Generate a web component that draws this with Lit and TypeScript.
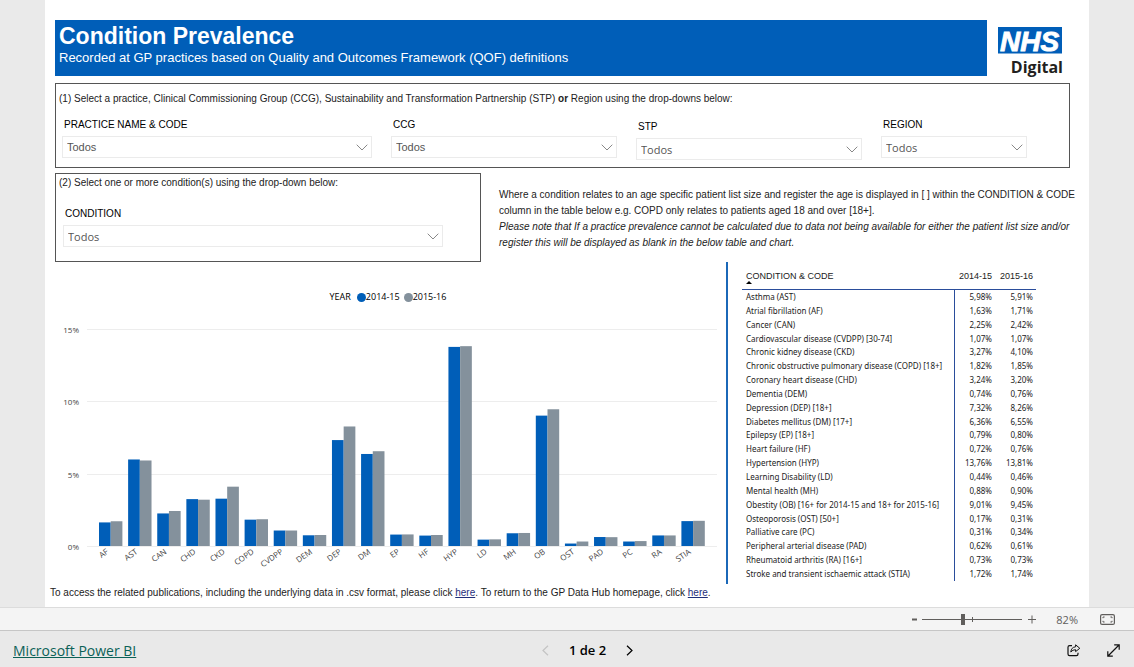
import { LitElement, html, svg, css } from "lit";
import { customElement, property } from "lit/decorators.js";

interface Condition {
  name: string;
  code: string;
  y1: number;
  y2: number;
}

const CONDITIONS: Condition[] = [
  { name: "Asthma (AST)", code: "AST", y1: 5.98, y2: 5.91 },
  { name: "Atrial fibrillation (AF)", code: "AF", y1: 1.63, y2: 1.71 },
  { name: "Cancer (CAN)", code: "CAN", y1: 2.25, y2: 2.42 },
  { name: "Cardiovascular disease (CVDPP) [30-74]", code: "CVDPP", y1: 1.07, y2: 1.07 },
  { name: "Chronic kidney disease (CKD)", code: "CKD", y1: 3.27, y2: 4.1 },
  { name: "Chronic obstructive pulmonary disease (COPD) [18+]", code: "COPD", y1: 1.82, y2: 1.85 },
  { name: "Coronary heart disease (CHD)", code: "CHD", y1: 3.24, y2: 3.2 },
  { name: "Dementia (DEM)", code: "DEM", y1: 0.74, y2: 0.76 },
  { name: "Depression (DEP) [18+]", code: "DEP", y1: 7.32, y2: 8.26 },
  { name: "Diabetes mellitus (DM) [17+]", code: "DM", y1: 6.36, y2: 6.55 },
  { name: "Epilepsy (EP) [18+]", code: "EP", y1: 0.79, y2: 0.8 },
  { name: "Heart failure (HF)", code: "HF", y1: 0.72, y2: 0.76 },
  { name: "Hypertension (HYP)", code: "HYP", y1: 13.76, y2: 13.81 },
  { name: "Learning Disability (LD)", code: "LD", y1: 0.44, y2: 0.46 },
  { name: "Mental health (MH)", code: "MH", y1: 0.88, y2: 0.9 },
  { name: "Obestity (OB) [16+ for 2014-15 and 18+ for 2015-16]", code: "OB", y1: 9.01, y2: 9.45 },
  { name: "Osteoporosis (OST) [50+]", code: "OST", y1: 0.17, y2: 0.31 },
  { name: "Palliative care (PC)", code: "PC", y1: 0.31, y2: 0.34 },
  { name: "Peripheral arterial disease (PAD)", code: "PAD", y1: 0.62, y2: 0.61 },
  { name: "Rheumatoid arthritis (RA) [16+]", code: "RA", y1: 0.73, y2: 0.73 },
  { name: "Stroke and transient ischaemic attack (STIA)", code: "STIA", y1: 1.72, y2: 1.74 },
];

const percent = (v: number) => v.toFixed(2).replace(".", ",") + "%";

@customElement("filter-select")
class FilterSelect extends LitElement {
  @property() label = "";
  @property({ type: Boolean, reflect: true }) humanist = false;

  static styles = css`
    :host {
      display: block;
      font-family: "Liberation Sans", Arial, sans-serif;
    }
    .label {
      display: block;
      padding-left: 2px;
      font-size: 10px;
      line-height: 14px;
      color: #000;
    }
    .box {
      display: grid;
      grid-template-columns: 1fr 21px;
      align-items: center;
      margin-top: 4px;
    }
    .select {
      grid-area: 1 / 1 / 2 / 3;
      appearance: none;
      width: 100%;
      height: 22px;
      margin: 0;
      padding: 0 24px 0 4px;
      border: 1px solid #ebebeb;
      border-radius: 0;
      background: #fff;
      color: #555;
      font-family: inherit;
      font-size: 11px;
    }
    :host([humanist]) .select {
      font-family: "Open Sans", "Noto Sans", sans-serif;
    }
    .chevron {
      grid-area: 1 / 2;
      width: 12px;
      height: 7px;
      pointer-events: none;
      margin-left: 5px;
      fill: none;
      stroke: #888;
    }
  `;

  render() {
    return html`
      <label class="label" for="field">${this.label}</label>
      <div class="box">
        <select class="select" id="field"><option>Todos</option></select>
        <svg class="chevron" viewBox="0 0 12 7"><path d="M.7 .7 6 6 11.3 .7" /></svg>
      </div>
    `;
  }
}

@customElement("prevalence-chart")
class PrevalenceChart extends LitElement {
  static styles = css`
    :host {
      display: block;
      font-family: "Open Sans", "Noto Sans", sans-serif;
    }
    .legend {
      display: flex;
      justify-content: center;
      align-items: center;
      gap: 4px;
      font-size: 9px;
      line-height: 14px;
      color: #000;
    }
    .key {
      display: flex;
      align-items: center;
    }
    .title {
      padding-right: 2px;
    }
    .dot {
      width: 9px;
      height: 9px;
      border-radius: 50%;
      background: #005eb8;
    }
    .dot.second {
      background: #84919c;
    }
    .plot {
      display: block;
      width: 100%;
      margin-top: 14px;
    }
    .grid {
      stroke: #ededed;
    }
    .axis {
      font-size: 8px;
      fill: #444;
      text-anchor: end;
    }
    .first-year {
      fill: #005eb8;
    }
    .second-year {
      fill: #84919c;
    }
  `;

  render() {
    const base = 228;
    const unit = 14.47;
    const pitch = 29.12;
    const bar = 11.7;
    const items = [...CONDITIONS].sort((a, b) => a.code.localeCompare(b.code));
    return html`
      <div class="legend">
        <span class="title">YEAR</span>
        <span class="key"><i class="dot"></i>2014-15</span>
        <span class="key"><i class="dot second"></i>2015-16</span>
      </div>
      <svg class="plot" viewBox="0 0 666 266" role="img" aria-label="Prevalence by condition and year">
        ${[0, 5, 10, 15].map((v) => {
          const y = Math.round(base - v * unit) + 0.5;
          return svg`<line class="grid" x1="32" x2="662" y1=${y} y2=${y}></line>
            <text class="axis" x="24" y=${y + 3}>${v}%</text>`;
        })}
        ${items.map((c, i) => {
          const x = 44 + i * pitch;
          return svg`<rect class="first-year" x=${x} y=${base - c.y1 * unit} width=${bar} height=${c.y1 * unit}></rect>
            <rect class="second-year" x=${x + bar} y=${base - c.y2 * unit} width=${bar} height=${c.y2 * unit}></rect>
            <text class="axis" transform=${`translate(${x + 10} 235) rotate(-35)`}>${c.code}</text>`;
        })}
      </svg>
    `;
  }
}

@customElement("prevalence-table")
class PrevalenceTable extends LitElement {
  static styles = css`
    :host {
      display: block;
    }
    .table {
      width: 100%;
      height: 310px;
      border-collapse: collapse;
      font-family: "Noto Sans", "Open Sans", sans-serif;
      font-size: 8px;
      line-height: 12px;
      color: #222;
    }
    th,
    td {
      padding: 0 3px 0 0;
      text-align: right;
      font-weight: 400;
      white-space: nowrap;
    }
    th.name,
    td.name {
      padding: 0 4px;
      text-align: left;
    }
    .head th {
      height: 18px;
      border-bottom: 1px solid #2a4d9b;
      font-family: "Liberation Sans", Arial, sans-serif;
      font-size: 9px;
      line-height: 10px;
      vertical-align: top;
    }
    .arrow {
      display: block;
      width: 6px;
      height: 3px;
    }
    td.name {
      border-right: 1px solid #2a4d9b;
    }
    .year {
      width: 38px;
    }
  `;

  render() {
    return html`
      <table class="table">
        <thead>
          <tr class="head">
            <th class="name">
              CONDITION &amp; CODE
              <svg class="arrow" viewBox="0 0 6 3"><path d="M0 3 3 0 6 3Z" /></svg>
            </th>
            <th class="year">2014-15</th>
            <th class="year">2015-16</th>
          </tr>
        </thead>
        <tbody>
          ${CONDITIONS.map(
            (c) => html`<tr>
              <td class="name">${c.name}</td>
              <td>${percent(c.y1)}</td>
              <td>${percent(c.y2)}</td>
            </tr>`
          )}
        </tbody>
      </table>
    `;
  }
}

@customElement("app-root")
class AppRoot extends LitElement {
  static styles = css`
    :host {
      display: flex;
      flex-direction: column;
      min-height: 100vh;
      background: #eaeaea;
      font-family: "Liberation Sans", Arial, sans-serif;
      font-size: 10px;
      color: #222;
    }
    * {
      box-sizing: border-box;
    }
    .report {
      flex: 1;
      margin: 0 45px;
      padding: 20px 19px 0 5px;
      background: #fff;
    }
    .body {
      padding-left: 5px;
    }
    .top {
      display: flex;
      gap: 11px;
      padding-right: 7px;
    }
    .banner {
      flex: 1;
      padding: 3px 4px 9px;
      background: #005eb8;
      color: #fff;
    }
    .heading {
      margin: 0;
      font-size: 23px;
      line-height: 26px;
      font-weight: 700;
    }
    .sub {
      margin: 0;
      font-size: 13px;
      line-height: 18px;
    }
    .logo {
      display: block;
      width: 65px;
      height: 49px;
      margin-top: 7px;
      overflow: visible;
    }
    .nhs {
      font: italic 700 28px "Liberation Sans", Arial, sans-serif;
      fill: #fff;
      stroke: #fff;
      stroke-width: 0.9;
    }
    .digital {
      font: 700 16px "Open Sans", "Noto Sans", sans-serif;
      fill: #231f20;
      text-anchor: end;
    }
    .panel {
      border: 1px solid #555;
      padding: 8px 3px 9px;
      margin-top: 7px;
    }
    .hint {
      margin: 0;
      line-height: 14px;
    }
    .fields {
      display: grid;
      grid-template-columns: 329fr 245fr 245fr 146fr;
      margin-top: 12px;
      padding: 0 39px 0 3px;
    }
    .field {
      margin-right: 19px;
    }
    .field.lower {
      margin-top: 2px;
      margin-bottom: -2px;
    }
    .field.last {
      margin-right: 0;
    }
    .second {
      display: grid;
      grid-template-columns: minmax(0, 426fr) minmax(0, 571fr);
      gap: 18px;
      margin-top: 5px;
    }
    .second .panel {
      margin: 0;
      padding: 2px 3px 14px;
    }
    .condition {
      margin: 17px 34px 0 4px;
    }
    .note {
      padding-top: 14px;
      line-height: 16px;
      white-space: nowrap;
    }
    .note p {
      margin: 0;
    }
    .data {
      display: grid;
      grid-template-columns: 671fr 344fr;
    }
    .chart {
      padding: 28px 5px 0 0;
    }
    .side {
      border-left: 2px solid #1b68b8;
      padding: 9px 34px 0 14px;
    }
    .links {
      margin: 0;
      padding: 2px 0 6px;
      line-height: 14px;
    }
    .links a {
      color: #1f2f7a;
    }
    .status {
      display: flex;
      align-items: center;
      justify-content: flex-end;
      height: 24px;
      padding-right: 19px;
      border-top: 1px solid #dcdcdc;
      border-bottom: 1px solid #c6c6c6;
      background: #f4f4f4;
      color: #605e5c;
      font-family: "Open Sans", "Noto Sans", sans-serif;
      font-size: 11px;
    }
    .icon-button {
      display: flex;
      padding: 0;
      border: 0;
      background: none;
      color: inherit;
    }
    .icon {
      display: block;
      fill: none;
      stroke: currentColor;
    }
    .slider {
      appearance: none;
      width: 100px;
      height: 12px;
      margin: 0 6px 0 5px;
      background:
        linear-gradient(#605e5c, #605e5c) center / 1px 5px no-repeat,
        linear-gradient(#605e5c, #605e5c) center / 100% 1px no-repeat;
    }
    .slider::-webkit-slider-thumb {
      appearance: none;
      width: 4px;
      height: 11px;
      background: #605e5c;
    }
    .zoom {
      margin: 0 22px 0 20px;
    }
    .footer {
      display: grid;
      grid-template-columns: 1fr auto 1fr;
      align-items: center;
      height: 36px;
      padding: 2px 14px 0 13px;
      background: #e9e9e9;
      font-family: "Open Sans", "Noto Sans", sans-serif;
      font-size: 14px;
    }
    .brand {
      justify-self: start;
      color: #0b6157;
    }
    .pager {
      display: flex;
      align-items: center;
      gap: 20px;
      padding-left: 42px;
      color: #000;
      font-size: 13px;
      font-weight: 600;
    }
    .faded {
      color: #c4c4c4;
    }
    .actions {
      display: flex;
      justify-content: flex-end;
      gap: 26px;
      color: #111;
    }
  `;

  render() {
    return html`
      <main class="report">
        <div class="body">
          <header class="top">
            <div class="banner">
              <h1 class="heading">Condition Prevalence</h1>
              <p class="sub">Recorded at GP practices based on Quality and Outcomes Framework (QOF) definitions</p>
            </div>
            <svg class="logo" viewBox="0 0 65 49" role="img" aria-label="NHS Digital">
              <rect width="64" height="26.5" fill="#005eb8" />
              <text class="nhs" x="2" y="23.5">NHS</text>
              <text class="digital" x="65" y="46">Digital</text>
            </svg>
          </header>

          <section class="panel">
            <p class="hint">
              (1) Select a practice, Clinical Commissioning Group (CCG), Sustainability and Transformation Partnership
              (STP) <strong>or</strong> Region using the drop-downs below:
            </p>
            <div class="fields">
              <filter-select class="field" label="PRACTICE NAME &amp; CODE"></filter-select>
              <filter-select class="field" label="CCG"></filter-select>
              <filter-select class="field lower" label="STP" humanist></filter-select>
              <filter-select class="field last" label="REGION" humanist></filter-select>
            </div>
          </section>

          <section class="second">
            <div class="panel">
              <p class="hint">(2) Select one or more condition(s) using the drop-down below:</p>
              <filter-select class="condition" label="CONDITION" humanist></filter-select>
            </div>
            <div class="note">
              <p>
                Where a condition relates to an age specific patient list size and register the age is displayed in [ ]
                within the CONDITION &amp; CODE<br />column in the table below e.g. COPD only relates to patients aged
                18 and over [18+].
              </p>
              <p>
                <em
                  >Please note that If a practice prevalence cannot be calculated due to data not being available for
                  either the patient list size and/or<br />register this will be displayed as blank in the below table
                  and chart.</em
                >
              </p>
            </div>
          </section>

          <section class="data">
            <prevalence-chart class="chart"></prevalence-chart>
            <div class="side"><prevalence-table></prevalence-table></div>
          </section>
        </div>
        <p class="links">
          To access the related publications, including the underlying data in .csv format, please click
          <a href="#publications">here</a>. To return to the GP Data Hub homepage, click <a href="#home">here</a>.
        </p>
      </main>

      <div class="status">
        <button class="icon-button" aria-label="Zoom out">
          <svg class="icon" width="5" height="9" viewBox="0 0 5 9"><path d="M0 4.5H5" stroke-width="2" /></svg>
        </button>
        <input class="slider" type="range" min="0" max="100" value="40" aria-label="Zoom" />
        <button class="icon-button" aria-label="Zoom in">
          <svg class="icon" width="8" height="9" viewBox="0 0 8 9"><path d="M0 4.5H8M4 .5V8.5" /></svg>
        </button>
        <span class="zoom">82%</span>
        <button class="icon-button" aria-label="Fit to page">
          <svg class="icon" width="15" height="11" viewBox="0 0 15 11">
            <rect x=".6" y=".6" width="13.8" height="9.8" rx="1.5" stroke-width="1.2" />
            <path d="M3 4.2V3H4.6M10.4 3H12V4.2M12 6.8V8H10.4M4.6 8H3V6.8" />
          </svg>
        </button>
      </div>

      <footer class="footer">
        <a class="brand" href="#powerbi">Microsoft Power BI</a>
        <nav class="pager" aria-label="Pages">
          <button class="icon-button faded" aria-label="Previous page" disabled>
            <svg class="icon" width="7" height="11" viewBox="0 0 7 11"><path d="M6 .7 1 5.5 6 10.3" stroke-width="1.2" /></svg>
          </button>
          <span>1 de 2</span>
          <button class="icon-button" aria-label="Next page">
            <svg class="icon" width="7" height="11" viewBox="0 0 7 11"><path d="M1 .7 6 5.5 1 10.3" stroke-width="1.2" /></svg>
          </button>
        </nav>
        <div class="actions">
          <button class="icon-button" aria-label="Share">
            <svg class="icon" width="14" height="13" viewBox="0 0 14 13">
              <path d="M5 1.6H2.6Q1 1.6 1 3.2V10Q1 11.6 2.6 11.6H9.4Q11 11.6 11 10V8.8" stroke-width="1.2" />
              <path d="M8.6 .8 12.8 4.3 8.6 7.6V5.7Q5.6 5.6 3.8 8Q4.2 3.2 8.6 2.8Z" stroke-linejoin="round" />
            </svg>
          </button>
          <button class="icon-button" aria-label="Full screen">
            <svg class="icon" width="13" height="13" viewBox="0 0 13 13">
              <path d="M1 12 12 1M7.2 .8H12.2V5.8M.8 7.2V12.2H5.8" stroke-width="1.2" />
            </svg>
          </button>
        </div>
      </footer>
    `;
  }
}
